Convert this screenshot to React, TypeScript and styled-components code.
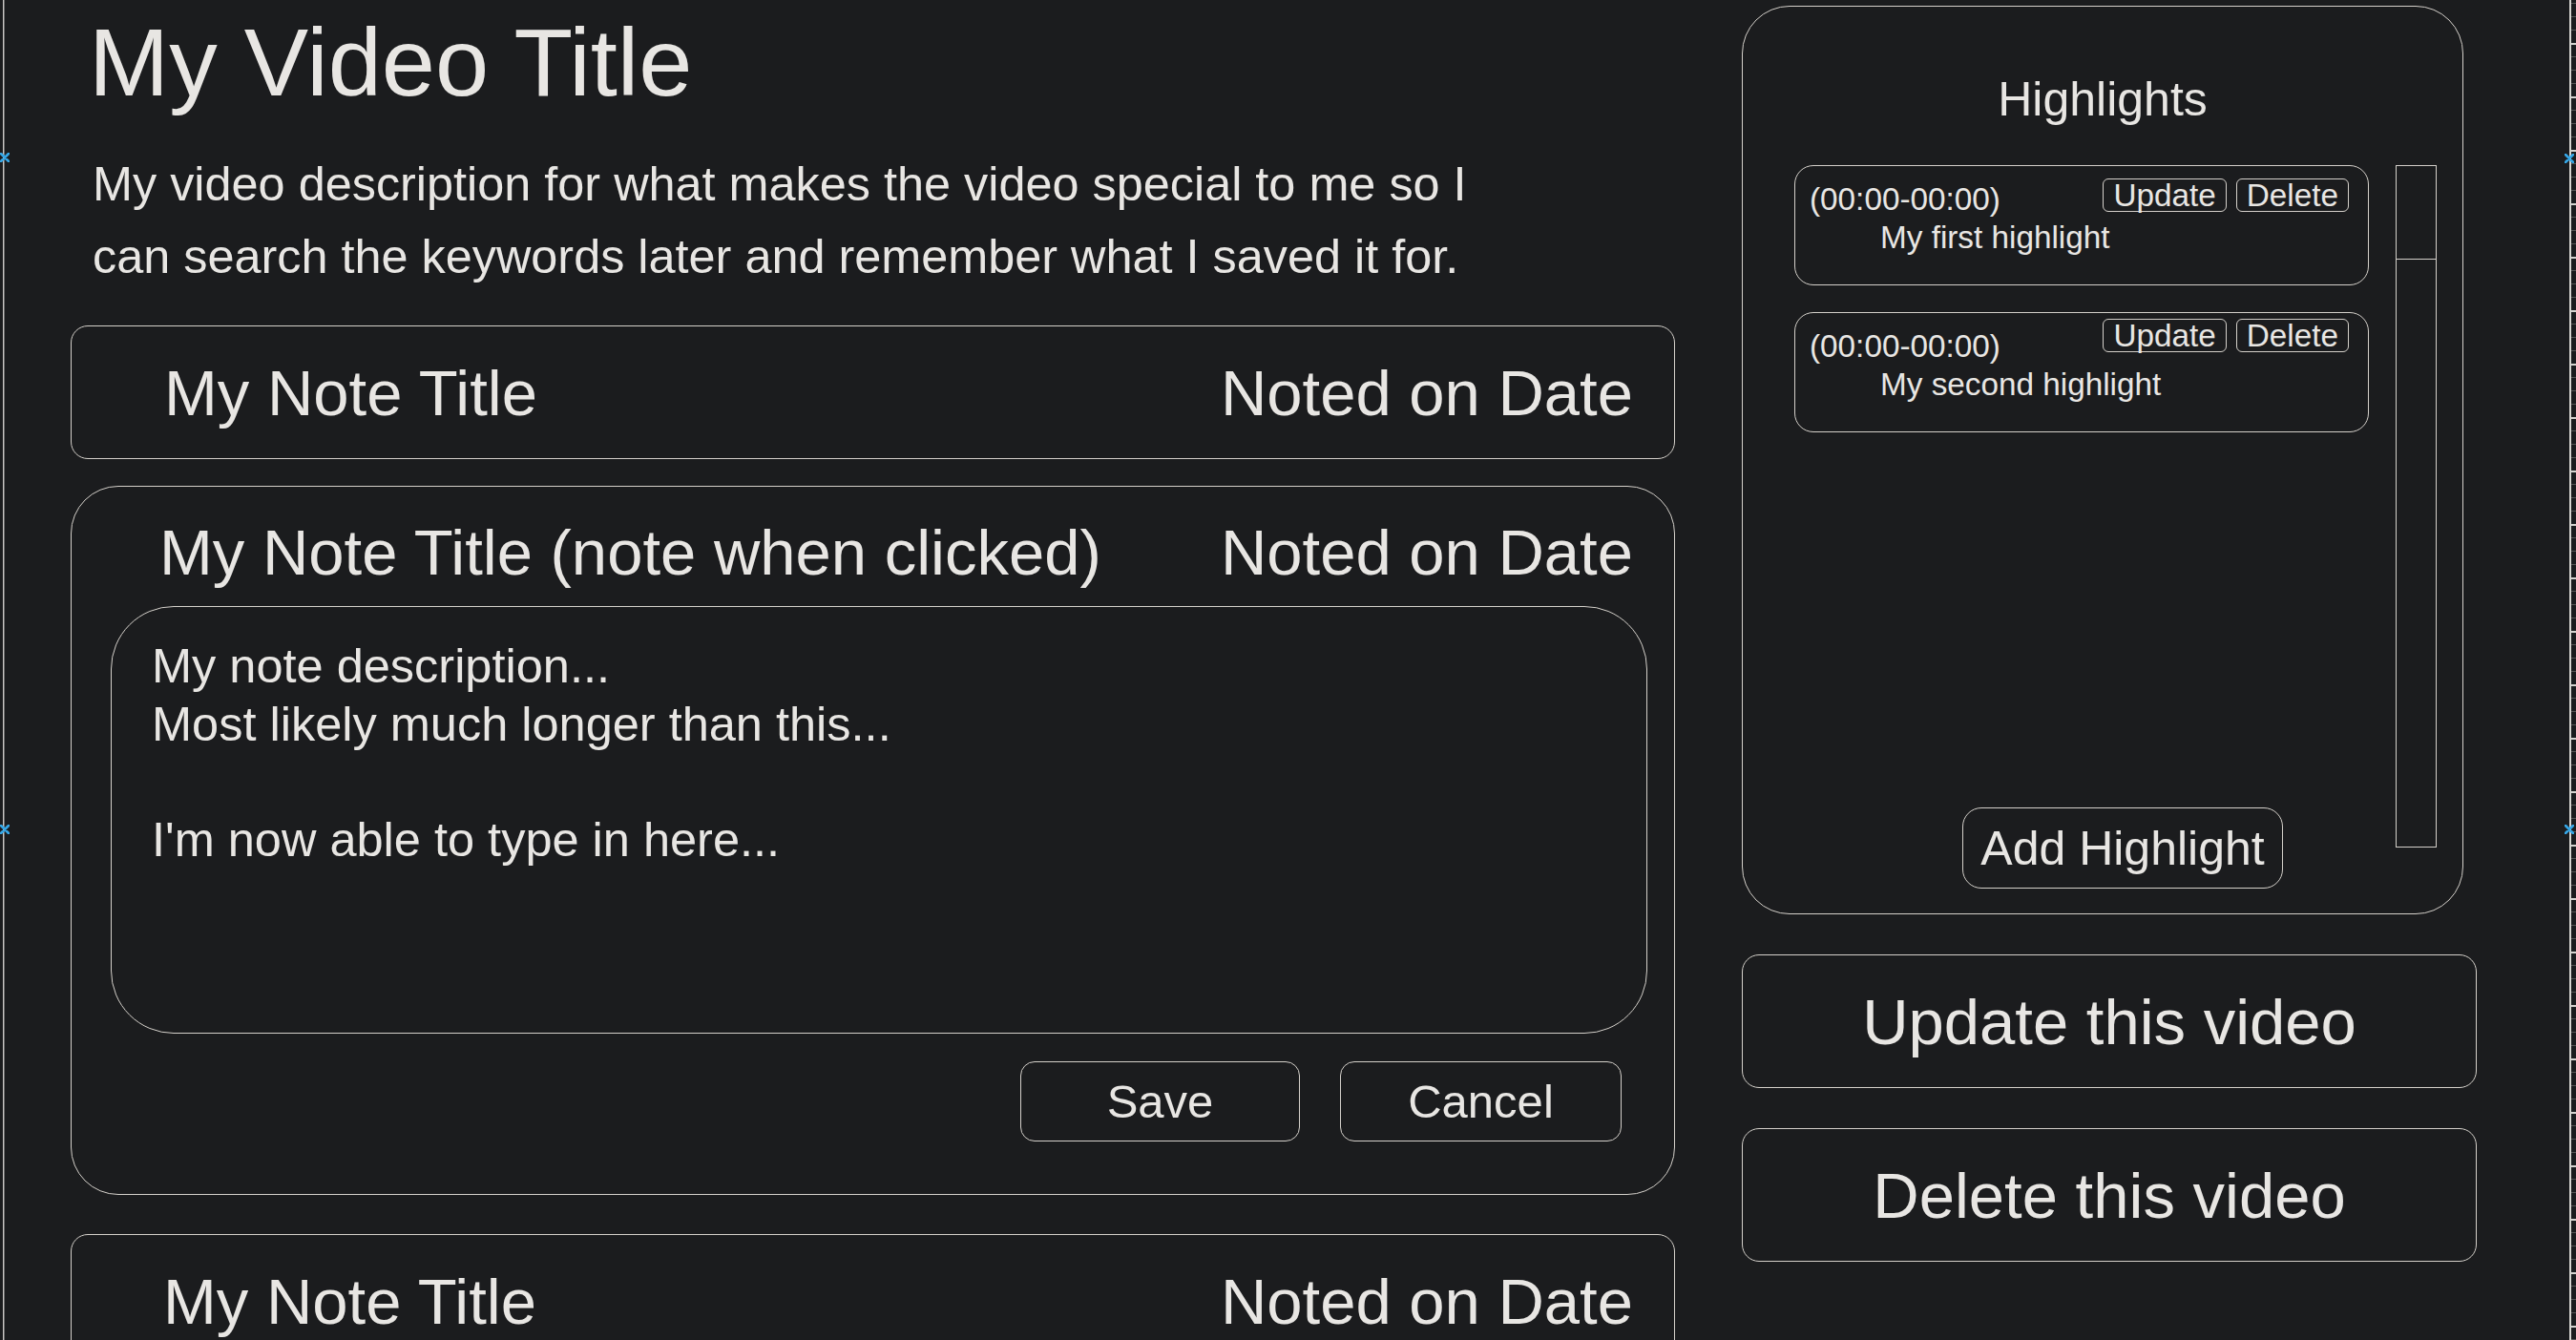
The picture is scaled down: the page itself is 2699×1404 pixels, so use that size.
import React from 'react';
import styled, {createGlobalStyle} from 'styled-components';

const line = '#d4d0ca';

const GlobalStyle = createGlobalStyle`
  html, body {
    margin: 0;
    height: 100%;
    overflow: hidden;
    background: #1b1c1e;
  }
  body {
    color: #e8e6e3;
    font-family: "Liberation Sans", Arial, sans-serif;
  }
  * {
    box-sizing: border-box;
  }
`;

const Page = styled.div`
  display: flex;
  align-items: flex-start;
  gap: 70px;
  padding-left: 74px;
  height: 1404px;
  overflow: hidden;
`;

const Main = styled.main`
  display: flex;
  flex-direction: column;
  width: 1681px;
  flex-shrink: 0;
`;

const Title = styled.h1`
  margin: 9px 0 0 19px;
  font-size: 101px;
  line-height: 112px;
  font-weight: normal;
`;

const Description = styled.p`
  margin: 34px 0 0 23px;
  width: 1480px;
  font-size: 50.4px;
  line-height: 76px;
`;

const NoteCard = styled.section<{ $top: number; $round?: number }>`
  flex-shrink: 0;
  margin-top: ${p => p.$top}px;
  border: 1px solid ${line};
  border-radius: ${p => p.$round ?? 18}px;
`;

const NoteHeader = styled.div<{ $indent: number; $open?: boolean }>`
  display: flex;
  align-items: center;
  justify-content: space-between;
  padding: ${p => (p.$open ? '31px' : '0')} 43px 0 ${p => p.$indent}px;
  height: ${p => (p.$open ? 'auto' : '138px')};
  font-size: 67px;
  line-height: 75px;
  white-space: nowrap;
`;

const NoteBody = styled.textarea`
  display: block;
  margin: 19px 0 0 41px;
  width: 1610px;
  height: 448px;
  padding: 32px 42px 28px;
  border: 1px solid ${line};
  border-radius: 66px;
  background: transparent;
  color: inherit;
  font-family: "Liberation Sans", Arial, sans-serif;
  font-size: 50.5px;
  line-height: 60.5px;
  resize: none;
  overflow: hidden;
  outline: none;
`;

const NoteActions = styled.div`
  display: flex;
  justify-content: flex-end;
  gap: 42px;
  margin-top: 29px;
  padding: 0 55px 55px 0;
`;

const OutlineButton = styled.button<{ $w: number; $h: number; $size: number; $round: number }>`
  flex-shrink: 0;
  width: ${p => p.$w}px;
  height: ${p => p.$h}px;
  padding: 0;
  border: 1px solid ${line};
  border-radius: ${p => p.$round}px;
  background: transparent;
  color: #e8e6e3;
  font-family: inherit;
  font-size: ${p => p.$size}px;
  cursor: pointer;
`;

const Side = styled.aside`
  display: flex;
  flex-direction: column;
  width: 770px;
  flex-shrink: 0;
`;

const HighlightPanel = styled.div`
  display: flex;
  flex-direction: column;
  margin-top: 6px;
  width: 756px;
  height: 952px;
  padding: 69px 0 26px;
  border: 1px solid ${line};
  border-radius: 50px;
`;

const PanelHeading = styled.h2`
  margin: 0;
  font-size: 50px;
  line-height: 56px;
  font-weight: normal;
  text-align: center;
`;

const PanelBody = styled.div`
  flex: 1;
  display: flex;
  gap: 28px;
  margin-top: 41px;
  padding: 0 27px 0 54px;
`;

const HighlightList = styled.div`
  display: flex;
  flex-direction: column;
  gap: 28px;
  width: 602px;
`;

const HighlightItem = styled.div`
  height: 126px;
  padding: 16px 20px 0 15px;
  border: 1px solid ${line};
  border-radius: 20px;
  font-size: 33.3px;
  line-height: 37px;
`;

const ItemTop = styled.div`
  display: flex;
  justify-content: space-between;
  align-items: flex-start;
`;

const ItemTools = styled.div<{ $lift: number }>`
  display: flex;
  gap: 10px;
  margin-top: -${p => p.$lift}px;
`;

const SmallButton = styled.button`
  height: 35.4px;
  padding: 0 10px;
  border: 1px solid ${line};
  border-radius: 6px;
  background: transparent;
  color: #e8e6e3;
  font-family: inherit;
  font-size: 33.3px;
  line-height: 33.4px;
`;

const ItemText = styled.div`
  margin-top: 3px;
  padding-left: 74px;
`;

const AddRow = styled.div`
  margin-top: auto;
  padding-left: 176px;
`;

const ScrollTrack = styled.div`
  width: 43px;
  height: 715px;
  border: 1px solid ${line};
`;

const ScrollThumb = styled.div`
  height: 98px;
  border-bottom: 1px solid ${line};
`;

const VideoAction = styled(OutlineButton)`
  margin-top: 42px;
`;

const EdgeGuide = styled.div`
  position: fixed;
  top: 0;
  bottom: 0;
  left: 3px;
  width: 2px;
  background: linear-gradient(to right, #c9c7c4 50%, #6b6b6b 50%);
`;

const Ruler = styled.div`
  position: fixed;
  top: 0;
  bottom: 0;
  left: 2692px;
  width: 7px;
  border-left: 2px solid #d6d4d0;
  background:
    repeating-linear-gradient(to bottom, #d6d4d0 0 2px, transparent 2px 56px) 0 45px / 100% 100% no-repeat,
    repeating-linear-gradient(to bottom, #555 0 1px, transparent 1px 14px) 0 3px / 100% 100% no-repeat;
`;

const Marker = styled.svg<{ $x: number; $y: number }>`
  position: fixed;
  left: ${p => p.$x}px;
  top: ${p => p.$y}px;
`;

function Cross({x, y}: { x: number; y: number }) {
    return (
        <Marker $x={x} $y={y} width="10" height="10" viewBox="0 0 10 10">
            <path d="M1 1L9 9M9 1L1 9" stroke="#35a6e6" strokeWidth="2.6" strokeLinecap="round"/>
        </Marker>
    );
}

const highlights = [
    {range: '(00:00-00:00)', text: 'My first highlight', lift: 3},
    {range: '(00:00-00:00)', text: 'My second highlight', lift: 10},
];

const noteText = "My note description...\nMost likely much longer than this...\n\nI'm now able to type in here...";

function App() {
    return (
        <>
            <GlobalStyle/>
            <Page>
                <Main>
                    <Title>My Video Title</Title>
                    <Description>
                        My video description for what makes the video special to me so I can search the keywords later and remember what I saved it for.
                    </Description>

                    <NoteCard $top={34}>
                        <NoteHeader $indent={97}>
                            <span>My Note Title</span>
                            <span>Noted on Date</span>
                        </NoteHeader>
                    </NoteCard>

                    <NoteCard $top={28} $round={50}>
                        <NoteHeader $indent={92} $open>
                            <span>My Note Title (note when clicked)</span>
                            <span>Noted on Date</span>
                        </NoteHeader>
                        <NoteBody defaultValue={noteText} spellCheck={false}/>
                        <NoteActions>
                            <OutlineButton $w={293} $h={84} $size={49} $round={15}>Save</OutlineButton>
                            <OutlineButton $w={295} $h={84} $size={49} $round={15}>Cancel</OutlineButton>
                        </NoteActions>
                    </NoteCard>

                    <NoteCard $top={41}>
                        <NoteHeader $indent={96}>
                            <span>My Note Title</span>
                            <span>Noted on Date</span>
                        </NoteHeader>
                    </NoteCard>
                </Main>

                <Side>
                    <HighlightPanel>
                        <PanelHeading>Highlights</PanelHeading>
                        <PanelBody>
                            <HighlightList>
                                {highlights.map(h => (
                                    <HighlightItem key={h.text}>
                                        <ItemTop>
                                            <span>{h.range}</span>
                                            <ItemTools $lift={h.lift}>
                                                <SmallButton>Update</SmallButton>
                                                <SmallButton>Delete</SmallButton>
                                            </ItemTools>
                                        </ItemTop>
                                        <ItemText>{h.text}</ItemText>
                                    </HighlightItem>
                                ))}
                                <AddRow>
                                    <OutlineButton $w={336} $h={85} $size={50} $round={20}>Add Highlight</OutlineButton>
                                </AddRow>
                            </HighlightList>
                            <ScrollTrack>
                                <ScrollThumb/>
                            </ScrollTrack>
                        </PanelBody>
                    </HighlightPanel>
                    <VideoAction $w={770} $h={140} $size={67} $round={18}>Update this video</VideoAction>
                    <VideoAction $w={770} $h={140} $size={67} $round={18}>Delete this video</VideoAction>
                </Side>
            </Page>

            <EdgeGuide/>
            <Ruler/>
            <Cross x={0} y={160}/>
            <Cross x={0} y={864}/>
            <Cross x={2687} y={161}/>
            <Cross x={2687} y={864}/>
        </>
    );
}

export default App;
